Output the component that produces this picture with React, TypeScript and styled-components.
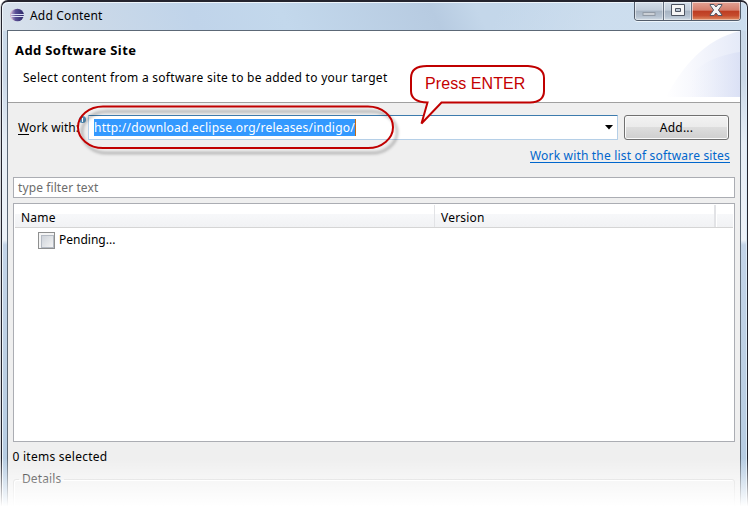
import React from 'react';
import styled, { createGlobalStyle } from 'styled-components';

const Global = createGlobalStyle`
  * { box-sizing: border-box; }
  html, body { margin: 0; background: #fff; overflow: hidden; }
`;

const Window = styled.div`
  position: relative;
  width: 747px;
  height: 508px;
  margin-left: 1px;
  display: flex;
  flex-direction: column;
  padding: 0 6px 0 5px;
  border: 1px solid #24242e;
  border-top-width: 2px;
  border-bottom: 0;
  border-radius: 7px 7px 0 0;
  box-shadow: -1px 0 0 #d5d8dc, inset 1px 1px 0 #eef5fb, inset -1px 0 0 #dcebf7;
  background:
    linear-gradient(115deg, transparent 0 66%, #d3e2f099 80%) 0 0 / 100% 29px no-repeat,
    linear-gradient(65deg, #d9e2ec 0, #cbd9e8 12%, #c0d4ea 26%, #c3d8ec 38%, #b7cbe1 58%, #c4d7ea 64%, #c2d7ec 100%) 0 0 / 100% 29px no-repeat,
    linear-gradient(#c9d9e9 0, #cbd9e8 15%, #e6edf5 28%, #edf2f8 47%, #c3d4e8 48%, #bdd0e4 70%, #b4cbe2 100%);
  font-family: 'Noto Sans', 'Open Sans', sans-serif;
  font-size: 12px;
  line-height: 16px;
  color: #000;
`;

const TitleBar = styled.header`
  display: flex;
  flex: 0 0 28px;
  align-items: flex-start;
`;

const AppIcon = styled.svg`
  width: 16px;
  height: 16px;
  margin: 5px 0 0 2px;
`;

const Title = styled.h1`
  margin: 6px 0 0 5px;
  font: inherit;
  letter-spacing: 0.18px;
`;

const Controls = styled.div`
  display: flex;
  width: 107px;
  height: 19px;
  margin: 0 0 0 auto;
  border: 1px solid #525c6a;
  border-top: 0;
  border-radius: 0 0 4px 4px;
  overflow: hidden;
  box-shadow: 0 1px 0 #edf5fb;
`;

const Control = styled.button<{ $width: number; $close?: boolean }>`
  display: flex;
  justify-content: center;
  align-items: center;
  flex: 0 0 ${p => p.$width}px;
  padding: 0 0 2px;
  border: 0;
  border-right: ${p => (p.$close ? 0 : '1px solid #657080')};
  box-shadow: inset 1px 1px 0 #ffffff88, inset -1px -1px 0 #ffffff66;
  background: ${p =>
    p.$close
      ? 'linear-gradient(#e3a294 0, #d47d6b 46%, #bd3c22 50%, #c54b2d 75%, #df8d64 100%)'
      : 'linear-gradient(#d3dde8 0, #c1ccd9 46%, #a6b3c2 50%, #b5c2d0 80%, #d0dae4 100%)'};
`;

const MinimizeIcon = styled.svg`
  width: 14px;
  height: 6px;
  margin-top: 7px;
`;

const Client = styled.main`
  display: flex;
  flex-direction: column;
  flex: 1;
  border: 1px solid #5c6876;
  border-bottom: 0;
  background: #efefef;
`;

const Banner = styled.section`
  display: flex;
  justify-content: space-between;
  height: 72px;
  background: #fff;
  border-bottom: 1px solid #a0a0a0;
`;

const BannerText = styled.div`
  padding: 11px 0 0 7px;
`;

const Heading = styled.h2`
  margin: 0;
  font-size: 13px;
  line-height: 16px;
  font-weight: 700;
  letter-spacing: 0.38px;
`;

const Message = styled.p`
  margin: 12px 0 0 8px;
  white-space: nowrap;
  letter-spacing: 0.28px;
`;

const BannerArt = styled.svg`
  width: 80px;
  height: 66px;
`;

const SiteRow = styled.div`
  display: flex;
  align-items: flex-start;
  height: 26px;
  margin: 12px 11px 0 10px;
`;

const SiteLabel = styled.label`
  width: 70px;
  padding-top: 5px;
  letter-spacing: 0.1px;
  white-space: nowrap;
`;

const Mnemonic = styled.span`
  text-decoration: underline;
  text-underline-offset: 2px;
`;

const Combo = styled.div`
  display: flex;
  align-items: center;
  justify-content: space-between;
  width: 530px;
  height: 25px;
  padding: 0 4px 0 5px;
  border: 1px solid #b5cfe7;
  border-top-color: #3d7bad;
  border-radius: 1px;
  background: #fff;
`;

const Selection = styled.span`
  height: 17px;
  width: 262px;
  margin-bottom: 1px;
  border-right: 1px solid #c66a10;
  background: #3399ff;
  color: #fff;
  line-height: 17px;
  letter-spacing: 0.22px;
  white-space: nowrap;
`;

const Arrow = styled.svg`
  width: 8px;
  height: 5px;
`;

const AddButton = styled.button`
  width: 105px;
  height: 25px;
  margin-left: 6px;
  padding: 0;
  border: 1px solid #707070;
  border-radius: 3px;
  box-shadow: inset 0 0 0 1px #fafafa;
  background: linear-gradient(#f2f2f2 0, #ebebeb 49%, #dddddd 50%, #cfcfcf 100%);
  font: inherit;
  letter-spacing: 0.2px;
`;

const SiteLink = styled.a`
  align-self: flex-end;
  height: 16px;
  margin: 7px 10px 0 0;
  color: #0066cc;
  text-decoration: underline;
  text-underline-offset: 2px;
  letter-spacing: 0.18px;
  white-space: nowrap;
`;

const Filter = styled.div`
  height: 21px;
  margin: 13px 5px 0;
  padding: 2px 4px;
  border: 1px solid #abadb3;
  background: #fff;
  color: #6d6d6d;
  letter-spacing: 0.1px;
`;

const Table = styled.div`
  height: 239px;
  margin: 5px 5px 0;
  padding: 1px;
  border: 1px solid #abadb3;
  background: #fff;
`;

const TableHead = styled.div`
  display: grid;
  grid-template-columns: 420px 281px 1fr;
  height: 23px;
  border-bottom: 1px solid #d5d5d5;
  background: linear-gradient(#fff 0 9px, #f7f8fa 9px, #f1f2f4 100%);
`;

const Column = styled.div<{ $wide?: boolean }>`
  padding: 5px 0 0 6px;
  border-right: ${p => (p.$wide ? 2 : 1)}px solid #e2e3e6;
  letter-spacing: 0.2px;
`;

const LastColumn = styled.div`
  border-left: 1px solid #fff;
`;

const TreeRow = styled.div`
  display: flex;
  align-items: center;
  height: 23px;
  padding: 1px 0 0 23px;
  gap: 4px;
`;

const CheckBox = styled.span`
  width: 17px;
  height: 17px;
  padding: 2px;
  border: 1px solid #8e8f8f;
  background: #f4f4f4;
  &::after {
    content: '';
    display: block;
    width: 11px;
    height: 11px;
    border: 1px solid #b4bac3;
    background: linear-gradient(135deg, #ced3da, #f3f3f3);
  }
`;

const Status = styled.p`
  margin: 7px 0 0 4.5px;
  letter-spacing: 0.25px;
`;

const Details = styled.fieldset`
  height: 60px;
  margin: 6px 5px 0;
  padding: 0 0 0 5px;
  border: 1px solid #d5d5d5;
  border-radius: 3px;
  box-shadow: inset 1px 1px 0 #fff;
`;

const Legend = styled.legend`
  padding: 0 3px;
  color: #111;
  letter-spacing: 0.1px;
`;

const Fade = styled.div`
  position: absolute;
  inset: auto -1px 0 -2px;
  height: 50px;
  background: linear-gradient(#ffffff00, #fff 97%);
`;

const Annotations = styled.svg`
  position: absolute;
  left: -2px;
  top: -2px;
  width: 748px;
  height: 508px;
  pointer-events: none;
`;

const CalloutText = styled.span`
  position: absolute;
  left: 423px;
  top: 72px;
  color: #c40000;
  font: 16px/20px 'Liberation Sans', Arial, sans-serif;
  letter-spacing: 0.08px;
  white-space: nowrap;
`;

export default function App() {
  return (
    <>
      <Global />
      <Window>
        <TitleBar>
          <AppIcon viewBox="0 0 16 16">
            <defs>
              <linearGradient id="globe" x1="0" x2="1">
                <stop stopColor="#b9a4ca" />
                <stop offset=".35" stopColor="#5a4f94" />
                <stop offset="1" stopColor="#2c2869" />
              </linearGradient>
            </defs>
            <circle cx="7" cy="8" r="6" fill="#cfb5cc" />
            <circle cx="8.5" cy="8" r="6.3" fill="url(#globe)" />
            <path d="M2 7.5h13M2 9.5h13" stroke="#dce0f4" />
          </AppIcon>
          <Title>Add Content</Title>
          <Controls>
            <Control $width={29} aria-label="Minimize">
              <MinimizeIcon viewBox="0 0 14 6">
                <rect x="1" y="1.5" width="12" height="3" fill="#cbd0d6" stroke="#929ba6" />
              </MinimizeIcon>
            </Control>
            <Control $width={28} aria-label="Maximize">
              <svg width="14" height="12" viewBox="0 0 14 12">
                <path d="M.5.5h13v11H.5zM4.5 4.5v3h5v-3z" fill="#f5f5f5" fillRule="evenodd" stroke="#4c5360" />
              </svg>
            </Control>
            <Control $width={48} $close aria-label="Close">
              <svg width="14" height="12" viewBox="0 0 14 12">
                <path d="M1 .5h4L7 3l2-2.5h4V1L9.4 6l3.6 5v.5H9L7 9l-2 2.5H1V11l3.6-5L1 1z" fill="#f5f5f5" stroke="#515765" />
              </svg>
            </Control>
          </Controls>
        </TitleBar>
        <Client>
          <Banner>
            <BannerText>
              <Heading>Add Software Site</Heading>
              <Message>Select content from a software site to be added to your target</Message>
            </BannerText>
            <BannerArt viewBox="0 0 80 66">
              <defs>
                <linearGradient id="arc" x1="0" x2="1">
                  <stop stopColor="#fff" />
                  <stop offset=".35" stopColor="#f7f8fd" />
                  <stop offset="1" stopColor="#e5eaf8" />
                </linearGradient>
                <linearGradient id="arc2" x1="0" x2="1">
                  <stop offset=".25" stopColor="#eef1fb" stopOpacity="0" />
                  <stop offset="1" stopColor="#dbe1f5" />
                </linearGradient>
              </defs>
              <path d="M6 66C22 36 45 8 80 0v66z" fill="url(#arc)" />
              <path d="M16 66C27 38 52 25 80 21v45z" fill="url(#arc2)" />
            </BannerArt>
          </Banner>
          <SiteRow>
            <SiteLabel><Mnemonic>W</Mnemonic>ork with:</SiteLabel>
            <Combo>
              <Selection>http://download.eclipse.org/releases/indigo/</Selection>
              <Arrow viewBox="0 0 8 5"><path d="M0 0h8L4 4.5z" /></Arrow>
            </Combo>
            <AddButton>Add...</AddButton>
          </SiteRow>
          <SiteLink>Work with the list of software sites</SiteLink>
          <Filter>type filter text</Filter>
          <Table>
            <TableHead>
              <Column>Name</Column>
              <Column $wide>Version</Column>
              <LastColumn />
            </TableHead>
            <TreeRow><CheckBox />Pending...</TreeRow>
          </Table>
          <Status>0 items selected</Status>
          <Details><Legend>Details</Legend></Details>
        </Client>
        <Fade />
        <Annotations viewBox="0 0 748 508">
          <defs>
            <filter id="shade" x="-5%" y="-20%" width="112%" height="150%">
              <feDropShadow dx="4" dy="5" stdDeviation="1.8" floodColor="#000" floodOpacity=".33" />
            </filter>
          </defs>
          <circle cx="82.5" cy="119.5" r="3.5" fill="#4d8ab5" />
          <path d="M82.5 118v4" stroke="#fff" />
          <rect x="78" y="106.500" width="315" height="41.500" rx="25" ry="20.750" fill="none" stroke="#c00000" strokeWidth="2" filter="url(#shade)" />
          <path d="M427 66H528Q544 67 544 78V91Q544 102 530 102.500H441.500L421.500 123.500L427.500 102.500Q411 102 411 91V78Q411 66 427 66Z" fill="#fff" stroke="#c00000" strokeWidth="2" />
        </Annotations>
        <CalloutText>Press ENTER</CalloutText>
      </Window>
    </>
  );
}
